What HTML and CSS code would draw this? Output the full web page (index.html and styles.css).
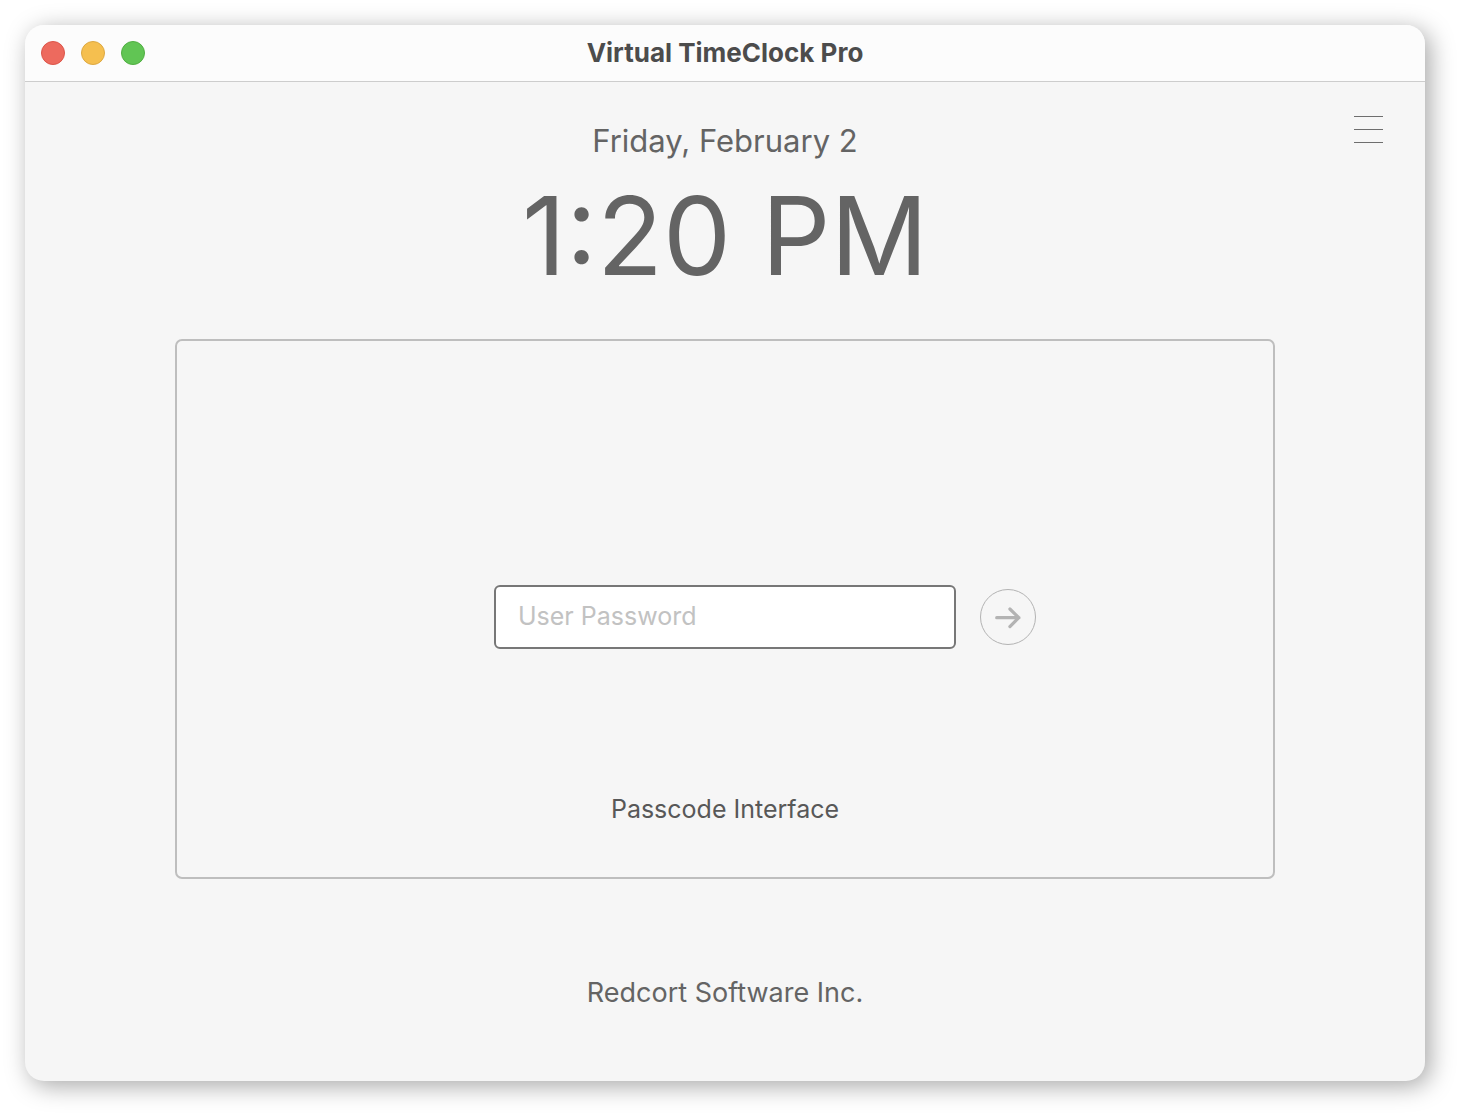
FILE: index.html
```
<!DOCTYPE html>
<html lang="en">
<head>
  <meta charset="UTF-8" />
  <meta name="viewport" content="width=device-width, initial-scale=1.0" />
  <title>Virtual TimeClock Pro</title>
  <link rel="stylesheet" href="styles.css">
</head>
<body>
  <div class="window">
    <header class="titlebar">
      <div class="lights">
        <button class="light close" aria-label="Close"></button>
        <button class="light minimize" aria-label="Minimize"></button>
        <button class="light zoom" aria-label="Zoom"></button>
      </div>
      <h1 class="title">Virtual TimeClock Pro</h1>
    </header>

    <main>
      <div class="top">
        <div class="now">
          <div class="date">Friday, February 2</div>
          <div class="clock">1:20 PM</div>
        </div>
        <button class="menu-btn" aria-label="Menu">
          <span></span>
          <span></span>
          <span></span>
        </button>
      </div>

      <section class="panel">
        <form class="login" onsubmit="return false">
          <input id="password" class="password" type="password" placeholder="User Password" aria-label="User Password">
          <button class="go-btn" type="submit" aria-label="Sign in">
            <svg width="28" height="28" viewBox="0 0 28 28" fill="none" stroke="#b3b3b3" stroke-width="3.2" stroke-linecap="round" stroke-linejoin="round">
              <path d="M2.7 14.7H25M15.9 6L24.8 14.7L15.9 23.6" />
            </svg>
          </button>
        </form>
        <p class="mode">Passcode Interface</p>
      </section>

      <footer class="company">Redcort Software Inc.</footer>
    </main>
  </div>
</body>
</html>
```
FILE: styles.css
```
* {
  box-sizing: border-box;
}
body {
  margin: 0;
  min-height: 100vh;
  padding: 25px 35px 35px 25px;
  display: flex;
  background-color: #ffffff;
  color: #646464;
  font-family: Inter, "Liberation Sans", sans-serif;
}
button {
  padding: 0;
  border: none;
  background: none;
  cursor: pointer;
}
.window {
  flex: 1;
  display: flex;
  flex-direction: column;
  border-radius: 19px;
  overflow: hidden;
  background-color: #f6f6f6;
  box-shadow: 5px 5px 24px rgba(0, 0, 0, 0.35);
}
.titlebar {
  display: grid;
  grid-template-columns: 1fr auto 1fr;
  align-items: center;
  height: 57px;
  padding: 0 16px;
  background-color: #fcfcfc;
  border-bottom: 1px solid #cdcdcd;
}
.lights {
  display: flex;
  gap: 16px;
}
.light {
  width: 24px;
  height: 24px;
  border: 1px solid;
  border-radius: 50%;
}
.close {
  background-color: #ed6a5e;
  border-color: #dc5549;
}
.minimize {
  background-color: #f5bf4f;
  border-color: #dca842;
}
.zoom {
  background-color: #61c554;
  border-color: #51ae42;
}
.title {
  margin: 0;
  font-size: 26px;
  line-height: 32px;
  font-weight: 700;
  color: #4c4c4c;
}
main {
  flex: 1;
  display: flex;
  flex-direction: column;
}
.top {
  display: grid;
  grid-template-columns: 1fr auto 1fr;
  align-items: start;
  padding: 32px 40px 0;
}
.now {
  grid-column: 2;
  text-align: center;
}
.date {
  font-size: 31px;
  line-height: 54px;
}
.clock {
  font-size: 108px;
  line-height: 136px;
}
.menu-btn {
  justify-self: end;
  display: flex;
  flex-direction: column;
  gap: 12px;
  padding: 2px;
}
.menu-btn span {
  width: 29px;
  height: 1px;
  background-color: #6e6e6e;
}
.panel {
  flex: 1;
  display: flex;
  flex-direction: column;
  justify-content: flex-end;
  margin: 35px 150px 0;
  padding-bottom: 50px;
  border: 2px solid #bebebe;
  border-radius: 7px;
}
.login {
  display: grid;
  grid-template-columns: 1fr 462px 1fr;
  column-gap: 24px;
  align-items: center;
}
.password {
  grid-column: 2;
  width: 100%;
  height: 64px;
  padding: 0 22px 2px;
  border: 2px solid #777777;
  border-radius: 6px;
  background-color: #ffffff;
  color: #4c4c4c;
  font-family: inherit;
  font-size: 25px;
  outline: none;
}
.password::placeholder {
  color: #c2c2c2;
}
.go-btn {
  display: flex;
  align-items: center;
  justify-content: center;
  width: 56px;
  height: 56px;
  border: 1px solid #b3b3b3;
  border-radius: 50%;
}
.mode {
  margin: 142px 0 0;
  text-align: center;
  font-size: 25px;
  line-height: 36px;
  color: #585858;
}
.company {
  padding: 96px 0 70px;
  text-align: center;
  font-size: 27px;
  line-height: 36px;
}
```
